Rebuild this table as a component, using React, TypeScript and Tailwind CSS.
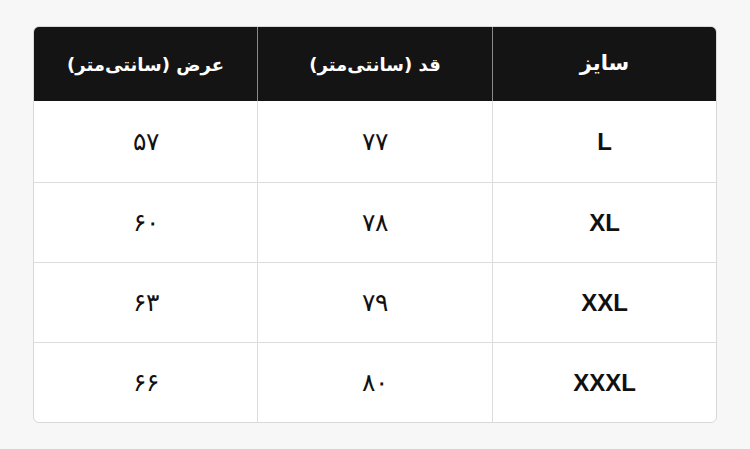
import React from 'react';

const ROWS = [
  { size: 'L', height: '۷۷', width: '۵۷' },
  { size: 'XL', height: '۷۸', width: '۶۰' },
  { size: 'XXL', height: '۷۹', width: '۶۳' },
  { size: 'XXXL', height: '۸۰', width: '۶۶' },
];

export default function App() {
  return (
    <div className="w-[750px] h-[449px] bg-[#f7f7f7] pt-[26px] pl-[33px]">
      <div
        dir="rtl"
        className="w-[684px] rounded-[6px] overflow-hidden border border-[#d9d9d9] bg-white font-['DejaVu_Sans','Noto_Sans',sans-serif]"
      >
        {/* Header */}
        <div className="grid grid-cols-[223px_236px_1fr] h-[74px] bg-[#141414] text-white font-bold">
          <div className="flex items-center justify-center text-[21px]">سایز</div>
          <div className="flex items-center justify-center text-[18px] border-x border-[#8a8a8a]">
            قد (سانتی‌متر)
          </div>
          <div className="flex items-center justify-center text-[18px]">عرض (سانتی‌متر)</div>
        </div>

        {/* Body rows */}
        {ROWS.map((r, i) => (
          <div
            key={r.size}
            className={
              i === 0
                ? 'grid grid-cols-[223px_236px_1fr] h-[81px] text-[#111]'
                : 'grid grid-cols-[223px_236px_1fr] h-[80px] text-[#111] border-t border-[#dcdcdc]'
            }
          >
            <div className="flex items-center justify-center text-[24px] font-bold font-['Liberation_Sans',Arial,sans-serif]">
              {r.size}
            </div>
            <div className="flex items-center justify-center text-[25px] font-extralight border-x border-[#dcdcdc]">
              {r.height}
            </div>
            <div className="flex items-center justify-center text-[25px] font-extralight">{r.width}</div>
          </div>
        ))}
      </div>
    </div>
  );
}
